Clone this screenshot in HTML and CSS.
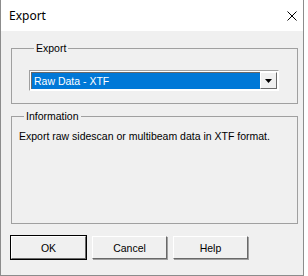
FILE: index.html
```html
<!DOCTYPE html>
<html lang="en">
<head>
  <meta charset="UTF-8" />
  <title>Export</title>
  <link rel="stylesheet" href="styles.css">
</head>
<body>
  <div class="window">
    <div class="titlebar">
      <span class="title">Export</span>
      <svg class="close" width="10" height="10" viewBox="0 0 10 10">
        <path d="M0.5 0.5 L9.5 9.5 M9.5 0.5 L0.5 9.5" stroke="#000" stroke-width="1" fill="none" />
      </svg>
    </div>

    <div class="dialog">
      <fieldset class="group group-export">
        <legend>Export</legend>
        <div class="combo">
          <div class="combo-value">Raw Data - XTF</div>
          <div class="combo-btn">
            <svg width="7" height="4" viewBox="0 0 7 4"><path d="M0 0 H7 L3.5 4 Z" fill="#000" /></svg>
          </div>
        </div>
      </fieldset>

      <fieldset class="group group-info">
        <legend>Information</legend>
        <p class="info-text">Export raw sidescan or multibeam data in XTF format.</p>
      </fieldset>

      <div class="buttons">
        <button class="btn btn-default" type="button">OK</button>
        <button class="btn" type="button">Cancel</button>
        <button class="btn" type="button">Help</button>
      </div>
    </div>
  </div>
</body>
</html>
```

FILE: styles.css
```css
body {
  margin: 0;
  padding: 0;
  background: #ffffff;
  font-family: "Liberation Sans", Arial, sans-serif;
  font-size: 10.5px;
  color: #000;
}

.window {
  width: 302px;
  height: 275px;
  border: 1px solid #8c8c8c;
  border-top: none;
  background: #f0f0f0;
  display: flex;
  flex-direction: column;
}

.titlebar {
  height: 31px;
  background: #ffffff;
  display: flex;
  align-items: center;
  justify-content: space-between;
  padding: 0 6px 0 8px;
}

.title {
  font-family: "Noto Sans", sans-serif;
  font-size: 12px;
  margin-top: -1px;
}

.dialog {
  flex: 1;
  padding: 11px 5px 0 10px;
}

.group {
  margin: 0;
  padding: 0;
  border: 1px solid #a0a0a0;
  min-width: 0;
  width: 287px;
  box-sizing: border-box;
}

.group legend {
  margin-left: 5px;
  padding: 0 2px;
  line-height: 13px;
}

.group-export {
  height: 62px;
  padding: 15px 0 0 17px;
}

.group-info {
  height: 114px;
  margin-top: 6px;
  padding: 7px 0 0 7px;
}

.info-text {
  margin: 0;
  line-height: 13px;
}

.combo {
  width: 250px;
  height: 21px;
  box-sizing: border-box;
  border: 1px solid;
  border-color: #a0a0a0 #ffffff #ffffff #a0a0a0;
  display: flex;
  background: #ffffff;
}

.combo-value {
  flex: 1;
  margin: 1px 0 1px 1px;
  border-top: 1px solid #696969;
  border-left: 1px solid #696969;
  background: #0078d7;
  color: #ffffff;
  padding-left: 2px;
  line-height: 16px;
}

.combo-btn {
  width: 17px;
  margin: 1px 1px 1px 0;
  box-sizing: border-box;
  border: 1px solid;
  border-color: #ffffff #696969 #696969 #ffffff;
  background: #f0f0f0;
  display: flex;
  align-items: center;
  justify-content: center;
}

.buttons {
  display: flex;
  gap: 6px;
  margin-top: 12px;
}

.btn {
  width: 75px;
  height: 23px;
  font-family: "Liberation Sans", Arial, sans-serif;
  font-size: 10.5px;
  background: #f0f0f0;
  border: 1px solid;
  border-color: #ffffff #696969 #696969 #ffffff;
  box-shadow: 1px 1px 0 #a0a0a0;
  padding: 0;
  color: #000;
}

.btn-default {
  outline: 1px solid #000;
}
```
